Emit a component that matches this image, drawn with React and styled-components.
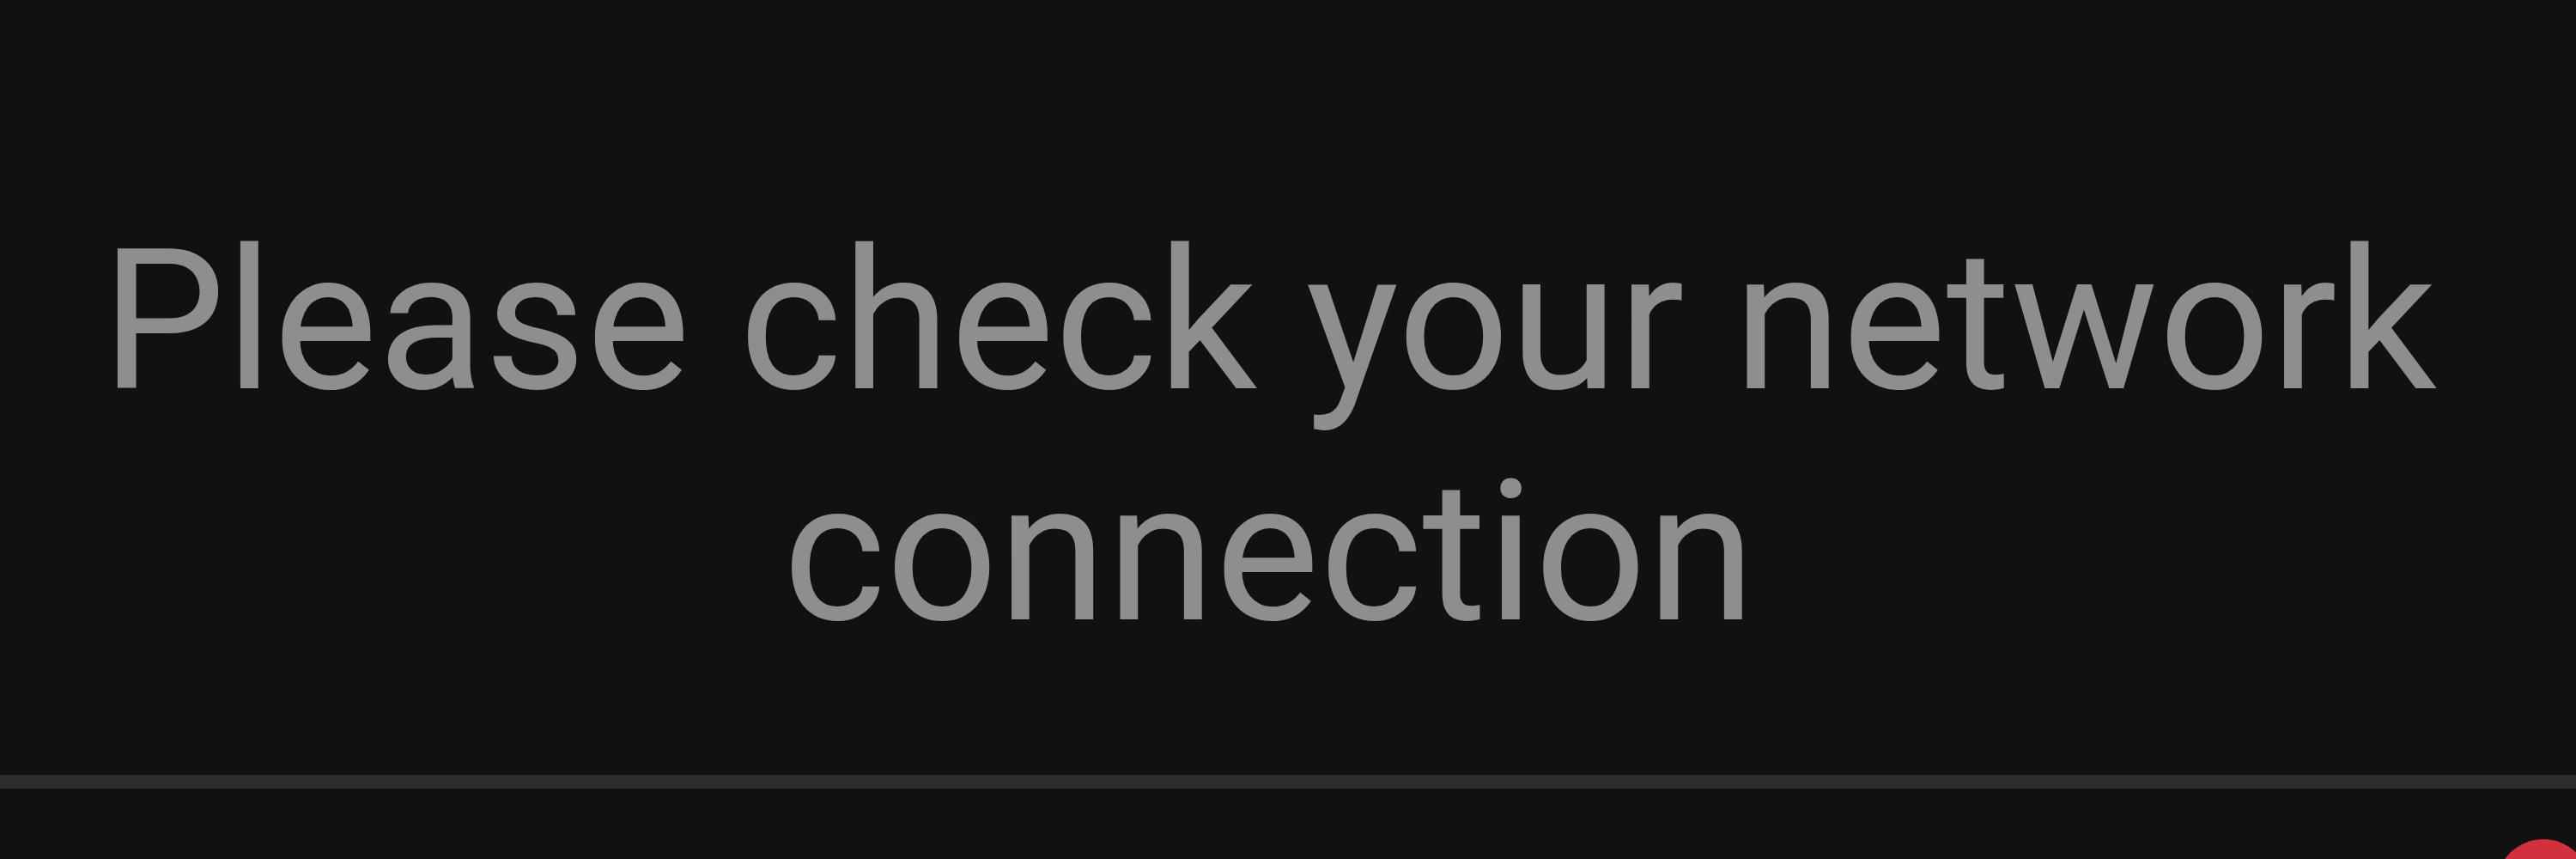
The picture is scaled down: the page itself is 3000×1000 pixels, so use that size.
import React from 'react';
import styled, { createGlobalStyle } from 'styled-components';

const GlobalStyle = createGlobalStyle`
	html, body {
		margin: 0;
		padding: 0;
		background-color: #111111;
	}
	body {
		font-family: Roboto, 'Noto Sans', sans-serif;
		overflow: hidden;
	}
`;

const Screen = styled.div`
	width: 3000px;
	height: 1000px;
	display: flex;
	flex-direction: column;
	background-color: #111111;
	overflow: hidden;
`;

const MessageArea = styled.div`
	height: 902px;
	box-sizing: border-box;
	padding: 240px 44px 0 0;
	display: flex;
	justify-content: center;
	align-items: flex-start;
`;

const Message = styled.p`
	margin: 0;
	width: 2800px;
	font-size: 229px;
	line-height: 269px;
	font-weight: 400;
	color: #8e8e8e;
	text-align: center;
`;

const Divider = styled.div`
	height: 16px;
	width: 100%;
	background-color: #2e2e2e;
`;

const BottomBar = styled.div`
	position: relative;
	flex: 1;
`;

const Badge = styled.span`
	position: absolute;
	left: 2907px;
	top: 59px;
	width: 110px;
	height: 110px;
	border-radius: 50%;
	background-color: #d2303d;
`;

const App = () => {
	return (
		<Screen>
			<GlobalStyle />
			<MessageArea>
				<Message>Please check your network connection</Message>
			</MessageArea>
			<Divider />
			<BottomBar>
				<Badge />
			</BottomBar>
		</Screen>
	);
};

export default App;
